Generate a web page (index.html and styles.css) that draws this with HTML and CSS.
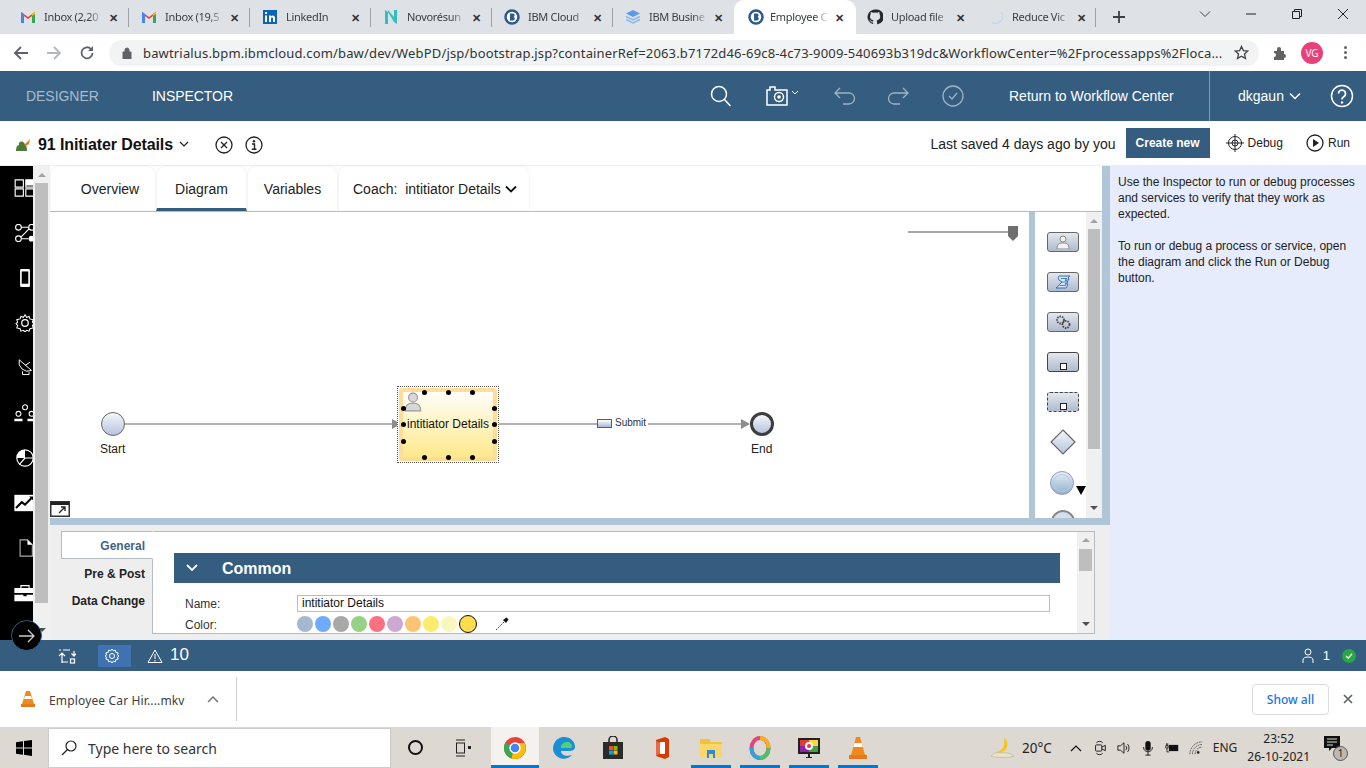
FILE: index.html
```html
<!DOCTYPE html>
<html lang="en">
<head>
  <meta charset="UTF-8">
  <title>Employee Car Hire - Inspector</title>
  <link rel="stylesheet" href="styles.css">
</head>
<body>
  <!-- browser tabs -->
  <div class="tabstrip">
    <div class="tab"><svg class="fav" viewBox="0 0 16 16"><path d="M1 14V3l7 5 7-5v11h-3V7L8 10 4 7v7z" fill="#ea4335"/><path d="M1 14V3l3 2v9z" fill="#4285f4"/><path d="M15 14V3l-3 2v9z" fill="#34a853"/><path d="M12 5l3-2v2l-3 2z" fill="#fbbc04"/></svg><span class="tab-name">Inbox (2,20</span><span class="tab-x">✕</span></div>
    <div class="tab"><svg class="fav" viewBox="0 0 16 16"><path d="M1 14V3l7 5 7-5v11h-3V7L8 10 4 7v7z" fill="#ea4335"/><path d="M1 14V3l3 2v9z" fill="#4285f4"/><path d="M15 14V3l-3 2v9z" fill="#34a853"/><path d="M12 5l3-2v2l-3 2z" fill="#fbbc04"/></svg><span class="tab-name">Inbox (19,5</span><span class="tab-x">✕</span></div>
    <div class="tab"><svg class="fav" viewBox="0 0 16 16"><rect x="1" y="1" width="14" height="14" fill="#0a66b2"/><path d="M3 6.500h2V13H3zM3 3h2v2H3zM7 6.500h2v1c1-1.600 4-1.500 4 1.500v4h-2V9.500c0-1.500-2-1.500-2 0V13H7z" fill="#fff"/></svg><span class="tab-name">LinkedIn</span><span class="tab-x">✕</span></div>
    <div class="tab"><svg class="fav" viewBox="0 0 16 16"><path d="M2 15V1l3 2v12zM14 1v14l-3-2V1zM5 3l6 10v-5L5 1z" fill="#33c0bd"/></svg><span class="tab-name">Novorésun</span><span class="tab-x">✕</span></div>
    <div class="tab"><svg class="fav" viewBox="0 0 16 16"><circle cx="8" cy="8" r="6.500" fill="#fff" stroke="#2e5a8c" stroke-width="2.500"/><path d="M6 4.500h3c2 0 2 3 .5 3.500 2 .5 1.500 3.500-.5 3.500H6z" fill="#2e5a8c"/></svg><span class="tab-name">IBM Cloud</span><span class="tab-x">✕</span></div>
    <div class="tab"><svg class="fav" viewBox="0 0 16 16"><path d="M8 1l7 3.500L8 8 1 4.500z" fill="#5b9be6"/><path d="M1 7.500L8 11l7-3.500M1 10.500L8 14l7-3.500" fill="none" stroke="#8ab8ee" stroke-width="1.500"/></svg><span class="tab-name">IBM Busine</span><span class="tab-x">✕</span></div>
    <div class="tab tab-active"><svg class="fav" viewBox="0 0 16 16"><circle cx="8" cy="8" r="6.500" fill="#fff" stroke="#2e5a8c" stroke-width="2.500"/><path d="M6 4.500h3c2 0 2 3 .5 3.500 2 .5 1.500 3.500-.5 3.500H6z" fill="#2e5a8c"/></svg><span class="tab-name">Employee C</span><span class="tab-x">✕</span></div>
    <div class="tab tab-after"><svg class="fav" viewBox="0 0 16 16"><path d="M8 .5a7.500 7.500 0 0 0-2.400 14.600c.4.1.5-.2.5-.4v-1.300c-2.100.4-2.600-.9-2.700-1.300-.2-.4-.6-.9-1-1-.3-.2-.1-.4 0-.4.700 0 1.200.7 1.300.9.800 1.300 2 .9 2.500.7 0-.5.300-.9.500-1.100-1.800-.2-3.700-.9-3.700-4 0-.9.300-1.600.8-2.200-.1-.2-.3-1 .1-2.100 0 0 .7-.2 2.200.8a7.500 7.500 0 0 1 4 0c1.500-1 2.200-.8 2.200-.8.400 1.100.2 1.900.1 2.100.5.600.8 1.300.8 2.200 0 3.100-1.900 3.800-3.700 4 .3.300.6.700.6 1.500v2.200c0 .2.100.5.500.4A7.500 7.500 0 0 0 8 .5z" fill="#24292e"/></svg><span class="tab-name">Upload file</span><span class="tab-x">✕</span></div>
    <div class="tab tab-last"><svg class="fav" viewBox="0 0 16 16"><path d="M13 3a7 7 0 0 1-9 10.500" fill="none" stroke="#c5d6f5" stroke-width="1.500"/></svg><span class="tab-name">Reduce Vic</span><span class="tab-x">✕</span></div>
    <svg class="new-tab" viewBox="0 0 14 14"><path d="M7 1v12M1 7h12" stroke="#3c4043" stroke-width="1.800"/></svg>
    <div class="win-btns">
      <svg viewBox="0 0 12 12"><path d="M1 3.500l5 5 5-5" fill="none" stroke="#3c4043"/></svg>
      <svg viewBox="0 0 12 12"><path d="M1 6h10" stroke="#222"/></svg>
      <svg viewBox="0 0 12 12"><path d="M1.500 3.500h7v7h-7zM3.500 3.500v-2h7v7h-2" fill="none" stroke="#222"/></svg>
      <svg viewBox="0 0 12 12"><path d="M1 1l10 10M11 1L1 11" stroke="#222"/></svg>
    </div>
  </div>

  <!-- address bar -->
  <div class="toolbar">
    <svg class="nav-ico" viewBox="0 0 16 16"><path d="M15 8H2M8 2L2 8l6 6" fill="none" stroke="#5f6368" stroke-width="1.800"/></svg>
    <svg class="nav-ico" viewBox="0 0 16 16"><path d="M1 8h13M8 2l6 6-6 6" fill="none" stroke="#b4b7bb" stroke-width="1.800"/></svg>
    <svg class="nav-ico" viewBox="0 0 16 16"><path d="M13.500 8A5.500 5.500 0 1 1 12 4" fill="none" stroke="#5f6368" stroke-width="1.800"/><path d="M14 1v5H9z" fill="#5f6368"/></svg>
    <div class="omnibox">
      <svg class="lock" viewBox="0 0 10 12"><path d="M1 5h8v7H1zM3 5V3a2 2 0 0 1 4 0v2" fill="#5f6368" stroke="#5f6368"/></svg>
      <span class="url">bawtrialus.bpm.ibmcloud.com/baw/dev/WebPD/jsp/bootstrap.jsp?containerRef=2063.b7172d46-69c8-4c73-9009-540693b319dc&amp;WorkflowCenter=%2Fprocessapps%2Floca...</span>
      <svg class="star" viewBox="0 0 16 16"><path d="M8 1.500l2 4.400 4.700.5-3.500 3.200 1 4.700L8 11.900l-4.200 2.400 1-4.700L1.300 6.400 6 5.900z" fill="none" stroke="#444" stroke-width="1.400"/></svg>
    </div>
    <svg class="puzzle" viewBox="0 0 16 16"><path d="M1 6h3V4a2 2 0 0 1 4 0v2h3v3a2 2 0 0 1 0 4v2H1v-3a2 2 0 0 0 0-4z" fill="#5f6368"/></svg>
    <span class="avatar">VG</span>
    <span class="dots"><i></i><i></i><i></i></span>
  </div>

  <!-- app header -->
  <header class="app-head">
    <span class="mode">DESIGNER</span>
    <span class="mode mode-on">INSPECTOR</span>
    <div class="head-tools">
      <svg class="t-search" viewBox="0 0 22 22"><circle cx="9" cy="9" r="7.500" fill="none" stroke="#fff" stroke-width="1.500"/><path d="M14.500 14.500l6 6.500" stroke="#fff" stroke-width="1.500"/></svg>
      <svg class="t-cam" viewBox="0 0 36 20"><path d="M1 4h3V1h5v3h12v15H1z" fill="none" stroke="#fff" stroke-width="1.500"/><circle cx="13" cy="11" r="4.500" fill="none" stroke="#fff" stroke-width="1.500"/><circle cx="13" cy="11" r="1.800" fill="#fff"/><path d="M26 5l3 3 3-3" fill="none" stroke="#fff"/></svg>
      <svg class="t-undo" viewBox="0 0 22 18"><path d="M6 1L1 6l5 5M1 6h14a5.500 5.500 0 0 1 0 11H9" fill="none" stroke="#9fb3c6" stroke-width="1.300"/></svg>
      <svg class="t-redo" viewBox="0 0 22 18"><path d="M16 1l5 5-5 5M21 6H7a5.500 5.500 0 0 0 0 11h6" fill="none" stroke="#9fb3c6" stroke-width="1.300"/></svg>
      <svg class="t-check" viewBox="0 0 22 22"><circle cx="11" cy="11" r="10" fill="none" stroke="#9fb3c6" stroke-width="1.300"/><path d="M7 11l3 3 5-6" fill="none" stroke="#9fb3c6" stroke-width="1.300"/></svg>
      <span class="return">Return to Workflow Center</span>
      <div class="user-box"><span>dkgaun</span><svg viewBox="0 0 12 8"><path d="M1 1.500l5 5 5-5" fill="none" stroke="#fff" stroke-width="1.500"/></svg></div>
      <svg class="t-help" viewBox="0 0 24 24"><circle cx="12" cy="12" r="10.500" fill="none" stroke="#fff" stroke-width="1.500"/><path d="M8.500 9.500a3.500 3.500 0 1 1 5.500 3c-1.300.8-2 1.300-2 3" fill="none" stroke="#fff" stroke-width="1.800"/><circle cx="12" cy="18.500" r="1.200" fill="#fff"/></svg>
    </div>
  </header>

  <!-- process title row -->
  <div class="subhead">
    <svg class="app-ico" viewBox="0 0 16 14"><path d="M1 13c0-4 1-6 3-6-1-3 3-5 5-2 1 1 3 2 3 8z" fill="#4f7a35"/><path d="M9 7l6-6-1 5-3 2z" fill="#e0802c"/></svg>
    <span class="proc-name">91 Initiater Details</span>
    <svg class="proc-chev" viewBox="0 0 10 6"><path d="M1 1l4 4 4-4" fill="none" stroke="#222" stroke-width="1.200"/></svg>
    <svg class="round-ico first" viewBox="0 0 18 18"><circle cx="9" cy="9" r="8" fill="none" stroke="#222" stroke-width="1.300"/><path d="M6 6l6 6M12 6l-6 6" stroke="#222" stroke-width="1.300"/></svg>
    <svg class="round-ico" viewBox="0 0 18 18"><circle cx="9" cy="9" r="8" fill="none" stroke="#222" stroke-width="1.300"/><path d="M7 8h2.500v5M6.800 13.200h4.600" fill="none" stroke="#222" stroke-width="1.400"/><circle cx="9" cy="5.200" r="1.200" fill="#222"/></svg>
    <span class="saved">Last saved 4 days ago by you</span>
    <span class="create">Create new</span>
    <svg class="act-ico debug-ico" viewBox="0 0 18 18"><circle cx="9" cy="9" r="6.500" fill="none" stroke="#222"/><circle cx="9" cy="9" r="3" fill="none" stroke="#222"/><path d="M9 0v18M0 9h18" stroke="#222"/></svg>
    <span class="act">Debug</span>
    <svg class="act-ico run-ico" viewBox="0 0 18 18"><circle cx="9" cy="9" r="8" fill="none" stroke="#222" stroke-width="1.300"/><path d="M7 5l6 4-6 4z" fill="#222"/></svg>
    <span class="act">Run</span>
  </div>

  <div class="main">
    <!-- left black rail -->
    <nav class="rail">
      <svg viewBox="0 0 26 22"><path d="M1 1h10v9H1zM14 1h10v9H14zM1 12h10v9H1zM14 12h10v9H14z" fill="none" stroke="#fff" stroke-width="1.400"/><path d="M14 1h10v7H14z" fill="#fff"/></svg>
      <svg viewBox="0 0 26 22"><circle cx="5" cy="4" r="3.500" fill="none" stroke="#fff" stroke-width="1.400"/><circle cx="21" cy="4" r="3.500" fill="none" stroke="#fff" stroke-width="1.400"/><circle cx="5" cy="18" r="3.500" fill="none" stroke="#fff" stroke-width="1.400"/><circle cx="21" cy="18" r="3.500" fill="#fff"/><path d="M8.500 4h9M8 16l10-10M8.500 18h9" stroke="#fff" stroke-width="1.400"/></svg>
      <svg viewBox="0 0 26 22"><rect x="7" y="0" width="12" height="22" rx="1.500" fill="#fff"/><rect x="9" y="3" width="8" height="15" fill="#000"/></svg>
      <svg viewBox="0 0 26 22"><path d="M13 1l2 3 3-1 1 3 4 1-1 3 2 2-2 2 1 3-4 1-1 3-3-1-2 2-2-2-3 1-1-3-4-1 1-3-2-2 2-2-1-3 4-1 1-3 3 1z" fill="none" stroke="#fff" stroke-width="1.300"/><circle cx="13" cy="11" r="4" fill="none" stroke="#fff" stroke-width="1.500"/></svg>
      <svg viewBox="0 0 26 22"><path d="M6 1a11 11 0 0 0 15 13zM13 8l6-4M10 15v4h8v-3" fill="none" stroke="#fff" stroke-width="1.200"/></svg>
      <svg viewBox="0 0 26 22"><circle cx="13" cy="4" r="3" fill="none" stroke="#fff" stroke-width="1.300"/><circle cx="5" cy="12" r="3" fill="none" stroke="#fff" stroke-width="1.300"/><circle cx="21" cy="12" r="3" fill="none" stroke="#fff" stroke-width="1.300"/><path d="M0 18h10v3H0zM16 18h10v3H16z" fill="#fff"/></svg>
      <svg viewBox="0 0 26 22"><circle cx="13" cy="11" r="10" fill="none" stroke="#fff" stroke-width="1.400"/><path d="M13 11V1a10 10 0 0 0-10 10z" fill="#fff"/><path d="M13 11h10M13 11l-7 8" stroke="#fff" stroke-width="1.400"/></svg>
      <svg viewBox="0 0 26 22"><rect x="0" y="1" width="26" height="20" fill="#fff"/><path d="M2 17l7-7 4 3 8-8" fill="none" stroke="#000" stroke-width="2.500"/><path d="M18 3h6v6z" fill="#000"/></svg>
      <svg viewBox="0 0 26 22"><path d="M7 1h9l6 6v14H7z" fill="none" stroke="#aaa" stroke-width="1.400"/><path d="M16 1l6 6h-6z" fill="#fff"/></svg>
      <svg viewBox="0 0 26 22"><path d="M8 5V2h10v3" fill="none" stroke="#fff" stroke-width="1.400"/><path d="M0 5h26v6H0zM0 13h11v2h4v-2h11v8H0z" fill="#fff"/></svg>
    </nav>
    <div class="rail-scroll vscroll">
      <span class="up"></span><span class="thumb"></span><span class="down"></span>
    </div>

    <div class="work">
      <div class="work-top">
        <div class="editor-tabs">
          <span class="etab">Overview</span>
          <span class="etab etab-on">Diagram</span>
          <span class="etab">Variables</span>
          <span class="etab etab-coach">Coach:&nbsp; intitiator Details<svg viewBox="0 0 12 8"><path d="M1 1.500l5 5 5-5" fill="none" stroke="#111" stroke-width="1.800"/></svg></span>
        </div>
        <div class="editor">
          <div class="canvas">
            <svg class="lines" viewBox="0 0 979 306">
              <path d="M858 20h105" stroke="#8a8a8a" stroke-width="1.500"/>
              <path d="M958 14h10v10l-5 5-5-5z" fill="#6f6f6f"/>
              <path d="M75 212h275M448 212h99M598 212h99" stroke="#b2b2b2" stroke-width="2"/>
              <path d="M342 207l9 5-9 5zM691 207l9 5-9 5z" fill="#8d8d8d"/>
            </svg>
            <span class="ev ev-start"></span>
            <span class="ev-label lab-start">Start</span>
            <div class="task">
              <div class="task-in">
                <svg class="task-user" viewBox="0 0 16 18"><circle cx="8" cy="5" r="4" fill="#d8d8d8" stroke="#999"/><path d="M1 17c0-6 3-7 7-7s7 1 7 7z" fill="#d8d8d8" stroke="#999"/></svg>
                <span class="task-name">intitiator Details</span>
              </div>
              <i class="hd h1"></i><i class="hd h2"></i><i class="hd h3"></i>
              <i class="hd h4"></i><i class="hd h5"></i>
              <i class="hd h6"></i><i class="hd h7"></i>
              <i class="hd h8"></i><i class="hd h9"></i>
              <i class="hd h10"></i><i class="hd h11"></i><i class="hd h12"></i>
            </div>
            <span class="flow-ico"></span>
            <span class="flow-name">Submit</span>
            <span class="ev ev-end"></span>
            <span class="ev-label lab-end">End</span>
            <svg class="popout" viewBox="0 0 20 16"><rect x=".75" y=".75" width="18.500" height="14.500" fill="#fff" stroke="#333" stroke-width="1.500"/><rect x="1" y="1" width="18" height="3" fill="#222"/><path d="M9 12l6-6M11 6h4v4" fill="none" stroke="#222" stroke-width="1.300"/></svg>
          </div>
          <div class="palette">
            <span class="pal-btn"><svg viewBox="0 0 14 14"><circle cx="7" cy="4" r="3" fill="#f2f2f2" stroke="#888"/><path d="M1 14c0-5 2-6 6-6s6 1 6 6z" fill="#f2f2f2" stroke="#888"/></svg></span>
            <span class="pal-btn"><svg viewBox="0 0 16 14"><path d="M4 1h11c-2 1-2 3-1 4h-4l3 2-3 2h3c-1 2-1 3-2 4H1c2-1 3-3 4-4l2-2-3-2c-1-2-1-3 0-4z" fill="#d5e4f5" stroke="#2f6fb3"/><path d="M6 3.500h6M7 7h4M5 10.500h6" stroke="#2f6fb3" stroke-width=".8"/></svg></span>
            <span class="pal-btn"><svg viewBox="0 0 16 14"><circle cx="5.500" cy="5" r="3.500" fill="none" stroke="#444" stroke-width="1.800" stroke-dasharray="1.500 1"/><circle cx="11" cy="9.500" r="3.500" fill="none" stroke="#444" stroke-width="1.800" stroke-dasharray="1.500 1"/></svg></span>
            <span class="pal-btn pal-sub"><i></i></span>
            <span class="pal-btn pal-dash"><i></i></span>
            <svg class="pal-diamond" viewBox="0 0 26 26"><defs><linearGradient id="pd" x1="0" y1="0" x2="0" y2="1"><stop offset="0" stop-color="#f7f8fb"/><stop offset="1" stop-color="#b5c3dc"/></linearGradient></defs><path d="M13 1l12 12-12 12L1 13z" fill="url(#pd)" stroke="#666" stroke-width="1.200"/></svg>
            <div class="pal-start"><span class="pal-circle"></span><svg viewBox="0 0 10 9"><path d="M0 0h10L5 9z" fill="#000"/></svg></div>
            <span class="pal-cut"></span>
          </div>
          <div class="pal-scroll vscroll">
            <span class="up"></span><span class="thumb"></span><span class="down"></span>
          </div>
        </div>
      </div>

      <div class="props">
        <div class="prop-tabs">
          <span class="ptab ptab-on">General</span>
          <span class="ptab">Pre &amp; Post</span>
          <span class="ptab ptab-last">Data Change</span>
        </div>
        <div class="prop-body">
          <div class="prop-main">
            <div class="sec-head">
              <svg viewBox="0 0 12 8"><path d="M1 1l5 5 5-5" fill="none" stroke="#fff" stroke-width="1.800"/></svg>
              <span>Common</span>
            </div>
            <div class="field">
              <label>Name:</label>
              <div class="name-box">intitiator Details</div>
            </div>
            <div class="field field-color">
              <label>Color:</label>
              <div class="swatches">
                <i class="sw c1"></i><i class="sw c2"></i><i class="sw c3"></i><i class="sw c4"></i><i class="sw c5"></i><i class="sw c6"></i><i class="sw c7"></i><i class="sw c8"></i><i class="sw c9"></i><i class="sw c10"></i>
                <svg class="dropper" viewBox="0 0 14 14"><path d="M1 13l8-8" stroke="#333" stroke-dasharray="1.500 1"/><path d="M8 3l3 3 2.500-3.500-2-2z" fill="#111"/></svg>
              </div>
            </div>
          </div>
          <div class="prop-scroll vscroll">
            <span class="up"></span><span class="thumb"></span><span class="down"></span>
          </div>
        </div>
      </div>
    </div>

    <aside class="inspector">
      <p>Use the Inspector to run or debug processes and services to verify that they work as expected.</p>
      <p>To run or debug a process or service, open the diagram and click the Run or Debug button.</p>
    </aside>
    <span class="rail-go"><svg viewBox="0 0 16 14"><path d="M0 7h15M9 1l6 6-6 6" fill="none" stroke="#ccc" stroke-width="1.300"/></svg></span>
  </div>

  <!-- status bar -->
  <div class="status">
    <svg class="st-swap" viewBox="0 0 18 16"><path d="M1 2h2M5 2h7M16 3v4M13.500 5.500l2.500 2.500 2-2.500M4 15V6M1 8l3-3 3 3M4 14h6" fill="none" stroke="#fff" stroke-width="1.200"/><rect x="12.500" y="11" width="4" height="4" fill="none" stroke="#fff" stroke-width="1.200"/></svg>
    <span class="st-gear"><svg viewBox="0 0 16 16"><path d="M8 1l1.300 1.800 2.100-.6.500 2.200 2.200.5-.6 2.100L15 8l-1.500 1 .6 2.100-2.200.5-.5 2.200-2.100-.6L8 15l-1.300-1.800-2.100.6-.5-2.200-2.200-.5.6-2.100L1 8l1.500-1-.6-2.100 2.200-.5.5-2.200 2.100.6z" fill="none" stroke="#fff"/><circle cx="8" cy="8" r="2.500" fill="none" stroke="#fff"/></svg></span>
    <svg class="st-warn" viewBox="0 0 16 14"><path d="M8 1l7 12.500H1z" fill="none" stroke="#fff"/><path d="M8 5v5M8 11v1.500" stroke="#fff"/></svg>
    <span class="st-count">10</span>
    <svg class="st-user" viewBox="0 0 12 15"><circle cx="6" cy="4" r="3" fill="none" stroke="#fff"/><path d="M1 15v-3c0-2 2-3 5-3s5 1 5 3v3" fill="none" stroke="#fff"/></svg>
    <span class="st-one">1</span>
    <span class="st-ok"><svg viewBox="0 0 10 8"><path d="M1 4l3 3 5-6" fill="none" stroke="#fff" stroke-width="1.600"/></svg></span>
  </div>

  <!-- downloads -->
  <div class="downloads">
    <svg class="dl-cone" viewBox="0 0 16 18"><path d="M6 1h4l4 13H2z" fill="#f08a1c"/><path d="M5 6h6l1 3H4z" fill="#fff"/><path d="M1 14h14v3H1z" fill="#e8791a"/></svg>
    <span class="dl-name">Employee Car Hir....mkv</span>
    <svg class="dl-up" viewBox="0 0 12 8"><path d="M1 7l5-5 5 5" fill="none" stroke="#777" stroke-width="1.500"/></svg>
    <span class="dl-sep"></span>
    <span class="show-all">Show all</span>
    <svg class="dl-x" viewBox="0 0 10 10"><path d="M1 1l8 8M9 1L1 9" stroke="#5f6368" stroke-width="1.700"/></svg>
  </div>

  <!-- windows taskbar -->
  <div class="taskbar">
    <svg class="win-logo" viewBox="0 0 16 16"><path d="M0 2.200L7 1.200v6.300H0zM8 1l8-1v7.500H8zM0 8.500h7v6.300l-7-1zM8 8.500h8V16l-8-1.200z" fill="#000"/></svg>
    <div class="search">
      <svg viewBox="0 0 16 16"><circle cx="10" cy="6" r="5" fill="none" stroke="#222" stroke-width="1.200"/><path d="M6.500 9.500L1 15" stroke="#222" stroke-width="1.200"/></svg>
      <span>Type here to search</span>
    </div>
    <span class="tb-cortana"></span>
    <svg class="tb-view" viewBox="0 0 16 18"><path d="M1 1h9M1 17h9" stroke="#222"/><rect x="1.500" y="4" width="8" height="10" fill="none" stroke="#222"/><rect x="13" y="7" width="3" height="3" fill="#222"/></svg>
    <div class="tb-app tb-on"><svg viewBox="0 0 24 24"><circle cx="12" cy="12" r="11" fill="#ea4335"/><path d="M12 12L2.500 6.500a11 11 0 0 0 6 16z" fill="#34a853"/><path d="M12 7h9.500A11 11 0 0 1 8.500 22.500z" fill="#fbbc04"/><circle cx="12" cy="12" r="5" fill="#4285f4" stroke="#fff" stroke-width="1.500"/></svg></div>
    <div class="tb-app"><svg viewBox="0 0 24 24"><path d="M12 1c7 0 11 5 11 10 0 3-3 4-6 4H9c0 4 5 6 11 4-3 4-10 5-14 2C1 18 0 12 2 8c2-5 6-7 10-7z" fill="#1b8fd6"/><path d="M9 11c0-3 3-5 6-5 3 0 5 2 5 5 0 1-1 1-2 1H9z" fill="#4dd07a"/></svg></div>
    <div class="tb-app"><svg viewBox="0 0 24 24"><path d="M8 7V4a4 4 0 0 1 8 0v3" fill="none" stroke="#222" stroke-width="1.500"/><rect x="2" y="6" width="20" height="17" fill="#2b2b2b"/><path d="M8 10h4v4H8z" fill="#f25022"/><path d="M12.500 10h4v4h-4z" fill="#7fba00"/><path d="M8 14.500h4v4H8z" fill="#00a4ef"/><path d="M12.500 14.500h4v4h-4z" fill="#ffb900"/></svg></div>
    <div class="tb-app"><svg viewBox="0 0 24 24"><path d="M15 1L6 4v16l9 3 4-2V3z" fill="#d83b01"/><path d="M10 6h5v12h-5z" fill="#fff"/><path d="M6 5l4 2v10l-4 3z" fill="#ea6a47"/></svg></div>
    <div class="tb-app tb-run"><svg viewBox="0 0 24 24"><path d="M1 3h9l2 3h11v16H1z" fill="#f3c23c"/><path d="M1 8h22v14H1z" fill="#fbd66a"/><path d="M8 14h8v8h-2v-4h-4v4H8z" fill="#2a8ad4"/></svg></div>
    <div class="tb-app tb-run"><svg viewBox="0 0 24 24"><ellipse cx="12" cy="12" rx="8.500" ry="10" fill="none" stroke="#e0467c" stroke-width="4"/><path d="M12 2c5 0 8.500 4 8.500 10" fill="none" stroke="#f6b01e" stroke-width="4"/><path d="M12 22c-5 0-8.500-4-8.500-10" fill="none" stroke="#27a6e0" stroke-width="4"/><path d="M20.500 12c0 6-3.500 10-8.500 10" fill="none" stroke="#4fbf6a" stroke-width="4"/></svg></div>
    <div class="tb-app tb-run"><svg viewBox="0 0 24 24"><rect x="1" y="2" width="22" height="16" fill="#222"/><rect x="3" y="4" width="9" height="6" fill="#e53935"/><rect x="12" y="4" width="9" height="6" fill="#fdd835"/><rect x="3" y="10" width="9" height="6" fill="#8e24aa"/><rect x="12" y="10" width="9" height="6" fill="#43a047"/><circle cx="12" cy="10" r="4" fill="#fff"/><circle cx="12" cy="10" r="2" fill="#e53935"/><path d="M9 21h6v1H9zM11 18h2v3h-2z" fill="#222"/></svg></div>
    <div class="tb-app tb-run"><svg viewBox="0 0 24 24"><path d="M10 1h4l5 18H5z" fill="#f08a1c"/><path d="M8.500 7h7l1.200 4H7.300z" fill="#fff"/><path d="M3 19h18v4H3z" fill="#e8791a"/></svg></div>

    <div class="tray">
      <svg class="tr-moon" viewBox="0 0 26 24"><path d="M14 1c4 4 5 11 0 14-3 2-6 2-9 1 5 0 8-3 9-7 .5-3 .5-5 0-8z" fill="#f5c518"/><path d="M1 20c3-3 6-4 10-3 4-1 9 0 13 3-4 2-18 2-23 0z" fill="#e9e3c9" stroke="#b9ae8b" stroke-width=".6"/></svg>
      <span class="tr-temp">20°C</span>
      <svg class="tr-a tr-caret" viewBox="0 0 12 8"><path d="M1 7l5-5 5 5" fill="none" stroke="#111" stroke-width="1.200"/></svg>
      <svg class="tr-a" viewBox="0 0 14 18"><path d="M3 3c2-2 5-2 7 0M3 15c2 2 5 2 7 0" fill="none" stroke="#111"/><rect x="2" y="5.500" width="7" height="7" rx="1" fill="none" stroke="#111"/><path d="M9 8l4-2v6l-4-2" fill="none" stroke="#111"/></svg>
      <svg class="tr-a" viewBox="0 0 16 16"><path d="M1 5.500h3L8 2v12L4 10.500H1z" fill="none" stroke="#111"/><path d="M10 5.500a3.500 3.500 0 0 1 0 5M12 3.500a6.500 6.500 0 0 1 0 9" fill="none" stroke="#111"/></svg>
      <svg class="tr-a" viewBox="0 0 12 18"><rect x="3" y="1" width="6" height="11" rx="3" fill="#111"/><path d="M1 8c0 7 10 7 10 0M6 13v4M3 17h6" fill="none" stroke="#111"/></svg>
      <svg class="tr-a" viewBox="0 0 18 14"><rect x="5" y="3" width="12" height="8" fill="#111"/><path d="M1 4v3h3V4zM2 1v3M3.500 1v3M2.500 7v5h3" fill="none" stroke="#111"/></svg>
      <svg class="tr-a" viewBox="0 0 16 16"><path d="M1 15a14 14 0 0 1 14-14M4 15A11 11 0 0 1 15 4M7 15a8 8 0 0 1 8-8" fill="none" stroke="#444" stroke-dasharray="2 1"/><circle cx="10.500" cy="13" r="1.500" fill="#222"/></svg>
      <span class="tr-lang">ENG</span>
      <div class="clock"><span>23:52</span><span>26-10-2021</span></div>
      <div class="notif">
        <svg viewBox="0 0 16 15"><path d="M0 0h16v12H8l-3 3v-3H0z" fill="#111"/><path d="M3 3h10M3 6h10M3 9h6" stroke="#ded8d3"/></svg>
        <span>1</span>
      </div>
    </div>
  </div>
</body>
</html>
```

FILE: styles.css
```css
* { box-sizing: border-box; }
html, body { margin: 0; padding: 0; }
body { width: 1366px; height: 768px; overflow: hidden; font-family: "Liberation Sans", Arial, sans-serif; color: #111; background: #fff; }
svg { display: block; flex: none; }

/* browser chrome */
.tabstrip { display: flex; height: 34px; padding: 0 17px 0 8px; background: #dee1e6; align-items: stretch; font-family: "Noto Sans", sans-serif; }
.tab { position: relative; flex: none; width: 121px; display: flex; align-items: center; padding-left: 12px; }
.tab::after { content: ""; position: absolute; right: 0; top: 8px; height: 19px; width: 1px; background: #9aa0a6; }
.tab-active { width: 122px; background: #fff; border-radius: 10px 10px 0 0; padding-left: 14px; }
.tab-active .fav { margin-right: 6px; }
.tab-active::after, .tab-after::after { display: none; }
.tab:nth-child(6)::after { display: none; }
.tab-after { padding-left: 11px; width: 120px; }
.tab-last { width: 120px; }
.fav { width: 16px; height: 16px; margin-right: 8px; }
.tab-name { width: 59px; margin-top: -2px; overflow: hidden; white-space: nowrap; font-size: 11px; letter-spacing: -.3px; color: #3c4043; -webkit-mask-image: linear-gradient(to right, #000 75%, transparent); mask-image: linear-gradient(to right, #000 75%, transparent); }
.tab-x { margin-left: 3px; width: 14px; font-size: 11px; font-weight: bold; color: #333; text-align: center; }
.new-tab { width: 14px; height: 14px; margin: 10px 0 0 16px; }
.win-btns { display: flex; margin-left: auto; }
.win-btns svg { width: 12px; height: 12px; margin: 8px 0 0 34px; }

.toolbar { display: flex; align-items: center; height: 37px; background: #fff; padding-left: 13px; }
.nav-ico { width: 16px; height: 16px; margin-right: 17px; }
.omnibox { display: flex; align-items: center; width: 1150px; height: 26px; margin-left: -3px; padding-left: 13px; background: #f1f3f4; border-radius: 13px; }
.lock { width: 10px; height: 12px; margin-right: 11px; }
.url { width: 1085px; font-size: 13px; font-family: "Noto Sans", sans-serif; color: #333; white-space: nowrap; letter-spacing: .16px; }
.star { width: 15px; height: 15px; margin-left: 6px; }
.puzzle { width: 16px; height: 16px; margin-left: 14px; }
.avatar { width: 22px; height: 22px; margin-left: 12px; border-radius: 50%; background: #e8417a; color: #fff; font: 10px/22px "Noto Sans", sans-serif; text-align: center; }
.dots { display: flex; flex-direction: column; gap: 2px; margin-left: 21px; }
.dots i { width: 3px; height: 3px; border-radius: 50%; background: #5f6368; }

/* app header */
.app-head { display: flex; align-items: center; height: 50px; background: #345d80; color: #fff; padding-left: 26px; font-size: 14px; }
.mode { color: #a9bccb; width: 126px; letter-spacing: -.05px; }
.mode-on { color: #fff; }
.head-tools { display: flex; align-items: center; height: 100%; margin-left: auto; }
.t-search { width: 22px; height: 22px; }
.t-cam { width: 36px; height: 20px; margin-left: 34px; }
.t-undo { width: 22px; height: 18px; margin-left: 32px; }
.t-redo { width: 22px; height: 18px; margin-left: 31px; }
.t-check { width: 22px; height: 22px; margin-left: 33px; }
.return { margin-left: 45px; width: 200px; }
.user-box { display: flex; align-items: center; height: 100%; width: 121px; padding-left: 28px; border-left: 1px solid #7f9ab2; }
.user-box svg { width: 12px; height: 8px; margin-left: 5px; }
.t-help { width: 24px; height: 24px; margin-right: 12px; }

/* title row */
.subhead { display: flex; align-items: center; height: 45px; padding-left: 15px; background: #fff; border-bottom: 1px solid #eee; }
.app-ico { width: 16px; height: 14px; margin: 3px 7px 0 0; }
.proc-name { margin-top: 3px; font-size: 16px; font-weight: bold; letter-spacing: -.1px; }
.proc-chev { width: 10px; height: 6px; margin: 2px 0 0 6px; }
.round-ico { width: 18px; height: 18px; margin: 3px 0 0 12px; }
.round-ico.first { margin-left: 26px; }
.saved { margin: 2px 0 0 auto; font-size: 14px; color: #222; }
.create { width: 84px; height: 30px; margin: -1px 16px 0 10px; background: #345d80; color: #fff; font-size: 12px; font-weight: bold; line-height: 30px; text-align: center; }
.act { font-size: 12px; color: #222; margin-top: -1px; }
.act-ico { width: 18px; height: 18px; margin-right: 4px; }
.debug-ico + .act { margin-right: 23px; }
.run-ico + .act { margin-right: 16px; }

/* main area */
.main { position: relative; display: flex; height: 474px; background: #aec6d8; }
.rail { width: 33px; height: 100%; background: #000; overflow: hidden; display: flex; flex-direction: column; gap: 27px; padding: 13px 0 0 14px; }
.rail svg { width: 22px; height: 18px; }
.rail-go { position: absolute; left: 11px; top: 454px; display: flex; align-items: center; justify-content: center; width: 31px; height: 31px; border-radius: 50%; background: #000; border: 1.500px solid #2c5f8b; }
.rail-go svg { width: 16px; height: 14px; }

.vscroll { position: relative; background: #f0f0f0; }
.vscroll .up, .vscroll .down { position: absolute; left: 50%; margin-left: -4px; width: 0; height: 0; border-left: 4px solid transparent; border-right: 4px solid transparent; }
.vscroll .up { border-bottom: 4px solid #a3a3a3; }
.vscroll .down { border-top: 4px solid #505050; }
.vscroll .thumb { position: absolute; left: 2px; right: 2px; background: #bebebe; }
.rail-scroll { width: 17px; height: 100%; }
.rail-scroll .up { top: 7px; }
.rail-scroll .thumb { top: 17px; height: 420px; }
.rail-scroll .down { top: 462px; }

.work { flex: none; width: 1060px; display: flex; flex-direction: column; }
.work-top { display: flex; flex-direction: column; height: 352px; margin-right: 8px; }
.editor-tabs { display: flex; flex: none; height: 46px; background: #fff; border-bottom: 1px solid #b3bcc5; font-size: 14px; color: #222; }
.etab { width: 91px; padding-top: 14px; text-align: center; border: 1px solid #f6f6f6; border-bottom: 0; border-radius: 8px 8px 0 0; line-height: 16px; }
.etab:first-child { width: 106px; padding-left: 14px; }
.etab-on { position: relative; height: 45px; border-bottom: 3px solid #345d80; }
.etab-coach { display: flex; width: 192px; padding-left: 14px; }
.etab-coach svg { width: 12px; height: 8px; margin: 4px 0 0 4px; }
.editor { flex: 1; display: flex; min-height: 0; }

.canvas { position: relative; flex: none; width: 979px; overflow: hidden; background: #fff; font-size: 12px; }
.lines { position: absolute; left: 0; top: 0; width: 979px; height: 306px; }
.ev { position: absolute; border-radius: 50%; background: linear-gradient(#f5f7fb, #b5c4dd); }
.ev-start { left: 51px; top: 200px; width: 24px; height: 24px; border: 1px solid #666; }
.ev-end { left: 700px; top: 200px; width: 24px; height: 24px; border: 3.500px solid #3d3d3d; }
.ev-label { position: absolute; top: 230px; color: #222; line-height: 14px; }
.lab-start { left: 50px; }
.lab-end { left: 701px; }
.task { position: absolute; left: 347px; top: 174px; width: 102px; height: 77px; padding: 1px; border: 1px dotted #555; background: #fff; }
.task-in { position: relative; width: 100%; height: 100%; border: 4px solid #fedc9a; border-radius: 3px; background: linear-gradient(#fffefa, #ffe98c); text-align: center; }
.task-user { position: absolute; left: 1px; top: 0; width: 18px; height: 20px; }
.task-name { display: block; padding-top: 25px; line-height: 14px; color: #111; white-space: nowrap; }
.hd { position: absolute; width: 5px; height: 5px; border-radius: 50%; background: #000; }
.h1 { left: 24px; top: 3px; } .h2 { left: 48px; top: 3px; } .h3 { left: 72px; top: 3px; }
.h4 { left: 3px; top: 19px; } .h5 { left: 94px; top: 19px; }
.h6 { left: 3px; top: 35px; } .h7 { left: 94px; top: 35px; }
.h8 { left: 3px; top: 52px; } .h9 { left: 94px; top: 52px; }
.h10 { left: 24px; top: 68px; } .h11 { left: 48px; top: 68px; } .h12 { left: 72px; top: 68px; }
.flow-ico { position: absolute; left: 547px; top: 207px; width: 15px; height: 9px; border: 1px solid #4a5a90; background: linear-gradient(#fff, #aab4d8); }
.flow-name { position: absolute; left: 565px; top: 205px; padding-right: 2px; background: #fff; font-size: 10px; line-height: 12px; color: #333; }
.popout { position: absolute; left: 0; top: 289px; width: 20px; height: 16px; }

.palette { position: relative; flex: none; width: 51px; margin-left: 6px; background: #fff; overflow: hidden; display: flex; flex-direction: column; align-items: center; padding: 20px 0 0 5px; gap: 20px; }
.pal-btn { display: flex; align-items: center; justify-content: center; flex: none; position: relative; width: 32px; height: 20px; border: 1px solid #666; border-radius: 3px; background: linear-gradient(#e4e8ee, #aebace); }
.pal-btn svg { width: 16px; height: 14px; }
.pal-btn i { position: absolute; left: 12px; bottom: 1px; width: 7px; height: 7px; border: 1px solid #222; background: #fff; }
.pal-sub { border: 1.500px solid #444; }
.pal-dash { border: 1px dashed #444; }
.pal-diamond { flex: none; width: 26px; height: 26px; margin-top: -3px; }
.pal-start { display: flex; flex: none; margin: -4px 0 0 9px; }
.pal-circle { width: 24px; height: 24px; border-radius: 50%; border: 1px solid #99b; outline: 1.500px solid #b5cde0; outline-offset: -4px; background: linear-gradient(#e6eef6, #8fb0cc); }
.pal-start svg { width: 10px; height: 9px; margin: 15px 0 0 2px; }
.pal-cut { flex: none; width: 24px; height: 24px; margin-top: -5px; border-radius: 50%; border: 2px solid #888; background: #d5e0ef; }
.pal-scroll { flex: none; width: 16px; }
.pal-scroll .up { top: 7px; }
.pal-scroll .thumb { top: 17px; height: 220px; }
.pal-scroll .down { top: 294px; }

.props { flex: 1; margin-top: 7px; display: flex; padding: 6px 15px 6px 11px; background: #eee; }
.prop-tabs { width: 92px; margin-right: -1px; position: relative; z-index: 1; }
.ptab { display: block; height: 28px; padding-right: 8px; text-align: right; font-size: 12px; font-weight: bold; line-height: 31px; color: #222; }
.ptab-on { color: #3f6487; background: #fff; border: 1px solid #b4bcc4; border-right: 1px solid #fff; padding-right: 7px; line-height: 28px; }
.ptab-last { height: 26px; line-height: 28px; }
.prop-body { flex: 1; height: 103px; display: flex; background: #fff; border: 1px solid #b4bcc4; overflow: hidden; }
.prop-main { flex: 1; padding: 21px 17px 0 21px; font-size: 12px; }
.sec-head { display: flex; align-items: center; height: 30px; background: #345d80; color: #fff; font-size: 16px; font-weight: bold; }
.sec-head svg { width: 12px; height: 8px; margin: 0 24px 0 12px; }
.sec-head span { padding-top: 1px; }
.field { display: flex; margin-top: 12px; color: #333; align-items: center; height: 17px; }
.field label { width: 123px; padding: 0 0 0 11px; }
.field-color label { padding-top: 2px; }
.name-box { width: 753px; height: 17px; padding-left: 4px; border: 1px solid #b8bec6; line-height: 15px; color: #111; }
.field-color { margin-top: 3px; }
.swatches { display: flex; align-items: center; gap: 2px; }
.sw { width: 16px; height: 16px; border-radius: 50%; }
.c1 { background: #a6b8d0; } .c2 { background: #6eaaff; } .c3 { background: #a8a8a8; } .c4 { background: #96d186; }
.c5 { background: #fb7182; } .c6 { background: #cda8d0; } .c7 { background: #fdc474; } .c8 { background: #fdec6c; }
.c9 { background: #f8f7bd; } .c10 { width: 18px; height: 18px; background: #ffdd4f; border: 1.500px solid #111; }
.dropper { width: 14px; height: 14px; margin-left: 16px; }
.prop-scroll { width: 17px; }
.prop-scroll .up { top: 6px; }
.prop-scroll .thumb { top: 17px; height: 22px; }
.prop-scroll .down { top: 90px; }

.inspector { width: 256px; padding: 8px 8px; background: #e6ecfb; font-size: 12px; line-height: 16px; color: #222; }
.inspector p { margin: 0 0 16px; }

/* status */
.status { display: flex; align-items: center; height: 31px; padding-left: 58px; background: #345d80; color: #fff; }
.st-swap { width: 18px; height: 16px; }
.st-gear { display: flex; align-items: center; justify-content: center; width: 33px; height: 22px; margin-left: 22px; padding-right: 5px; background: #3e72b0; }
.st-gear svg { width: 16px; height: 16px; }
.st-warn { width: 16px; height: 14px; margin-left: 16px; }
.st-count { margin: -2px 0 0 7px; font-size: 17px; }
.st-user { width: 12px; height: 15px; margin-left: auto; }
.st-one { margin-left: 9px; font-size: 13px; }
.st-ok { display: flex; align-items: center; justify-content: center; width: 14px; height: 14px; margin: 0 10px 0 12px; border-radius: 50%; background: #28a745; }
.st-ok svg { width: 8px; height: 6px; }

/* downloads bar */
.downloads { display: flex; align-items: center; height: 56px; padding-left: 20px; background: #fff; font-size: 12px; font-family: "Noto Sans", sans-serif; }
.dl-cone { width: 16px; height: 18px; }
.dl-name { width: 145px; margin: 2px 13px 0 13px; color: #3c4043; white-space: nowrap; letter-spacing: .15px; }
.dl-up { width: 12px; height: 8px; }
.dl-sep { width: 1px; height: 44px; margin-left: 17px; background: #d0d0d0; }
.show-all { width: 77px; height: 31px; margin-left: auto; border: 1px solid #dadce0; border-radius: 4px; color: #1a73e8; line-height: 29px; text-align: center; font-weight: 500; }
.dl-x { width: 10px; height: 10px; margin: 0 13px 0 14px; }

/* taskbar */
.taskbar { display: flex; align-items: center; height: 41px; background: #ded8d3; font-family: "Noto Sans", sans-serif; }
.win-logo { width: 16px; height: 16px; margin: 0 16px; }
.search { display: flex; align-items: center; width: 343px; height: 40px; margin-top: 1px; background: #fff; border: 1px solid #ccc; padding-left: 12px; font-size: 14px; color: #333; }
.search svg { width: 16px; height: 16px; margin-right: 11px; }
.tb-cortana { width: 15px; height: 15px; margin-left: 17px; border: 2.500px solid #111; border-radius: 50%; }
.tb-view { width: 16px; height: 18px; margin-left: 32px; margin-right: 20px; }
.tb-app { position: relative; display: flex; align-items: center; justify-content: center; flex: none; width: 49px; height: 41px; }
.tb-app svg { width: 24px; height: 24px; }
.tb-on { width: 48px; background: #f4f1ee; }
.tb-on::after, .tb-run::after { content: ""; position: absolute; left: 0; right: 0; bottom: 0; height: 3px; background: #0078d4; }
.tb-run::after { left: 5px; right: 4px; }
.tray { display: flex; align-items: center; margin-left: auto; font-size: 12px; color: #222; }
.tr-moon { width: 26px; height: 24px; }
.tr-temp { margin: 0 17px 0 6px; font-size: 13.500px; }
.tr-a { width: 14px; height: 16px; margin-right: 10px; }
.tr-caret { height: 8px; }
.tr-lang { margin: 0 10px 0 0; }
.clock { display: flex; flex-direction: column; align-items: center; gap: 4px; line-height: 14px; }
.notif { position: relative; width: 24px; height: 24px; margin: 0 18px 0 14px; }
.notif svg { width: 16px; height: 15px; }
.notif span { position: absolute; right: 0; bottom: -1px; width: 15px; height: 15px; border-radius: 50%; border: 1px solid #555; background: #bdb8b3; font-size: 10px; line-height: 13px; text-align: center; }
```
